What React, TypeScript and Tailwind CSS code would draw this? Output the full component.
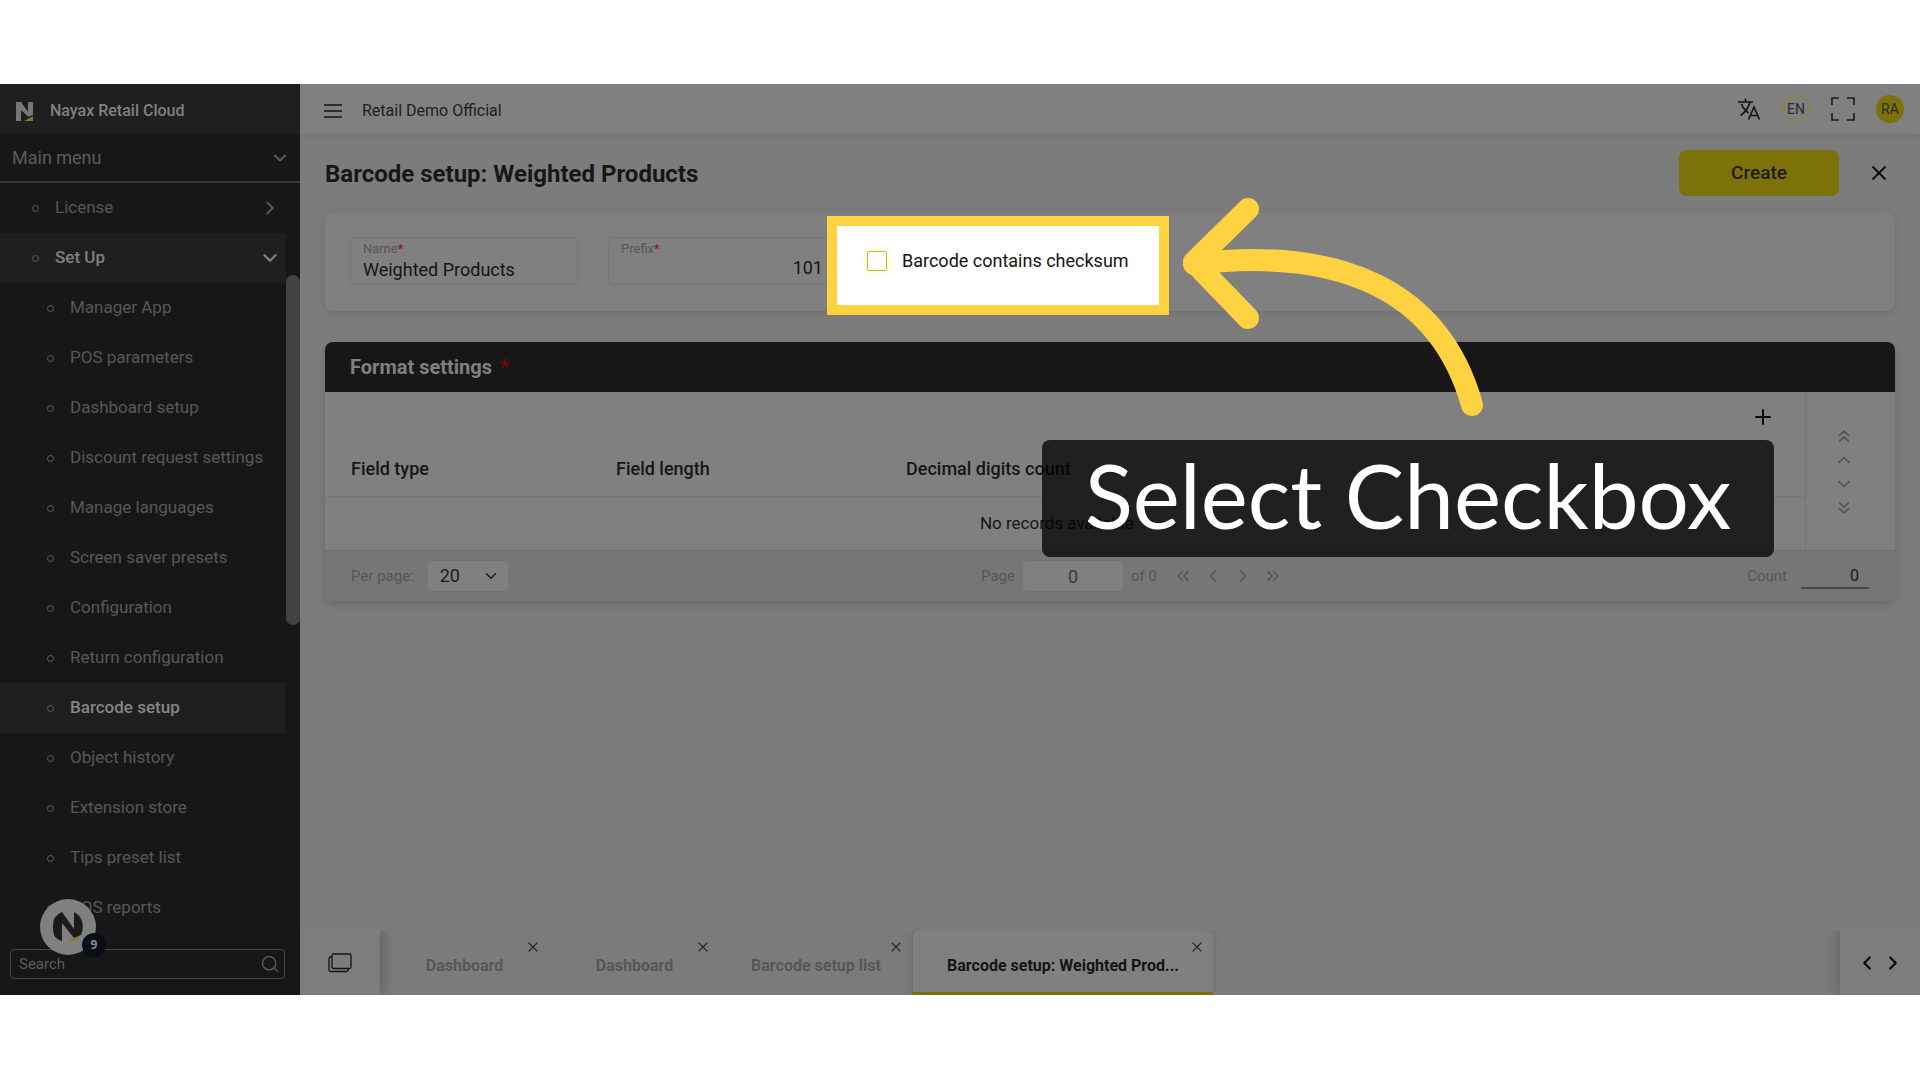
import { useState } from "react";
import {
  ChevronDown,
  ChevronLeft,
  ChevronRight,
  ChevronUp,
  ChevronsDown,
  ChevronsLeft,
  ChevronsRight,
  ChevronsUp,
  Plus,
  Search,
  X,
} from "lucide-react";

const menuItems = [
  "Manager App",
  "POS parameters",
  "Dashboard setup",
  "Discount request settings",
  "Manage languages",
  "Screen saver presets",
  "Configuration",
  "Return configuration",
  "Barcode setup",
  "Object history",
  "Extension store",
  "Tips preset list",
  "POS reports",
];

const tabs = [
  { id: 1, label: "Dashboard", width: "w-[170px]" },
  { id: 2, label: "Dashboard", width: "w-[170px]" },
  { id: 3, label: "Barcode setup list", width: "w-[193px]" },
  { id: 4, label: "Barcode setup: Weighted Prod...", width: "w-[300px]" },
];

const Dot = () => (
  <span className="size-[7px] shrink-0 rounded-full border-[1.5px] border-[#606060]" />
);

const Logo = () => (
  <svg viewBox="0 0 17 19" className="h-[19px] w-[17px]">
    <path d="M0 19V0h5l7 10V0h5v13l-5 1.500L5 8v11z" fill="#777" />
    <path d="M8 19l9-5v5z" fill="#86780a" />
  </svg>
);

const MenuIcon = () => (
  <svg viewBox="0 0 18 14" className="h-[14px] w-[18px]" fill="none" stroke="#2e2e2e" strokeWidth="2">
    <path d="M0 1h18M0 7h18M0 13h18" />
  </svg>
);

const TranslateIcon = () => (
  <svg viewBox="0 0 24 24" className="size-6" fill="none" stroke="#111" strokeWidth="1.6">
    <path d="M1 5h15M8.500 1.500V5M13 5c-1.200 5-4.500 10-9.500 13.500M4.500 7c1.200 4 3.800 6.500 7 9" />
    <path d="M11.500 22.500L17 10l5.500 12.500M13.300 18.500h7.400" />
  </svg>
);

const FullscreenIcon = () => (
  <svg viewBox="0 0 24 24" className="size-6" fill="none" stroke="#1a1a1a" strokeWidth="1.6">
    <path d="M1 8V1h7M16 1h7v7M23 16v7h-7M8 23H1v-7" />
  </svg>
);

const WindowsIcon = () => (
  <svg viewBox="0 0 24 20" className="h-5 w-6" fill="none" stroke="#141414" strokeWidth="1.3">
    <rect x="4" y="1" width="19" height="14.500" rx="1.500" />
    <path d="M4 4H2.500Q1 4 1 5.500v11.500q0 1.500 1.500 1.500H18.500q1.500 0 1.500-1.500v-1.500" />
  </svg>
);

const Sidebar = () => {
  const [active, setActive] = useState("Barcode setup");

  return (
    <aside className="relative flex w-[300px] shrink-0 flex-col bg-[#171717] text-[17px] text-[#575757]">
      <div className="flex h-[50px] items-center gap-[17px] bg-[#1f1f1f] pt-1 pl-4 text-base font-medium text-[#808080]">
        <Logo />
        <span>Nayax Retail Cloud</span>
      </div>
      <button className="flex h-[49px] items-center justify-between border-b-2 border-[#393939] pr-[10px] pl-3 text-lg text-[#5c5c5c]">
        Main menu
        <ChevronDown className="size-5" strokeWidth={2.2} />
      </button>
      <nav className="flex flex-col pr-[14px]">
        <button className="flex h-[50px] items-center pr-[5px] pl-8">
          <Dot />
          <span className="ml-4">License</span>
          <ChevronRight className="ml-auto size-[22px]" strokeWidth={2.2} />
        </button>
        <button className="flex h-[50px] items-center bg-[#1f1f1f] pr-[5px] pl-8 font-medium text-[#808080]">
          <Dot />
          <span className="ml-4">Set Up</span>
          <ChevronDown className="ml-auto size-[22px]" strokeWidth={2.5} />
        </button>
        {menuItems.map((item) => (
          <button
            key={item}
            onClick={() => setActive(item)}
            className={`flex h-[50px] items-center gap-4 pl-[47px] text-left ${
              active === item ? "bg-[#1f1f1f] font-medium text-[#858585]" : ""
            }`}
          >
            <Dot />
            {item}
          </button>
        ))}
      </nav>
      <div className="absolute top-[191px] right-0 h-[350px] w-[14px] rounded-full bg-[#424242]" />
      <label className="mx-[10px] mt-4 mr-[15px] flex h-[30px] items-center rounded-sm border border-[#484848] pr-1 pl-2">
        <input
          type="text"
          aria-label="Search"
          placeholder="Search"
          className="min-w-0 flex-1 bg-transparent text-[15px] outline-none placeholder:text-[#5c5c5c]"
        />
        <Search className="size-5" strokeWidth={1.8} />
      </label>
      <button
        aria-label="Notifications"
        className="absolute bottom-[40px] left-10 flex size-14 items-center justify-center rounded-full bg-[#808080]"
      >
        <svg viewBox="0 0 30 32" className="h-8 w-[30px]">
          <path d="M1 24Q-1 16 1 8Q4 3 9 1l12 17V1q6 3 8 9q2 8-1 14l-7 3L9 12v18Q3 28 1 24z" fill="#1b1b1b" />
          <path d="M15 31q2-2 13-7q-4 7-13 7z" fill="#8a7a1e" />
        </svg>
        <span className="absolute -right-[10px] -bottom-[2px] flex size-6 items-center justify-center rounded-full bg-[#090f19] font-['Open_Sans'] text-xs font-bold text-[#8c8c8c]">
          9
        </span>
      </button>
    </aside>
  );
};

const TopBar = () => (
  <header className="relative flex h-[50px] items-center bg-[#808080] pr-4 pl-6 shadow-[0_2px_6px_rgba(0,0,0,0.08)]">
    <button aria-label="Toggle menu" className="pt-1">
      <MenuIcon />
    </button>
    <span className="ml-5 pt-[3px] text-base text-[#1d1d1d]">Retail Demo Official</span>
    <div className="ml-auto flex items-center gap-[21px]">
      <button aria-label="Translate">
        <TranslateIcon />
      </button>
      <button className="size-7 rounded-full border-[1.5px] border-[#91851a] text-sm text-[#2b2b2b]">EN</button>
      <button aria-label="Fullscreen">
        <FullscreenIcon />
      </button>
      <button className="size-7 rounded-full bg-[#7d7109] text-sm text-[#2b2b2b]">RA</button>
    </div>
  </header>
);

const BarcodeForm = () => {
  const [name, setName] = useState("Weighted Products");
  const [prefix, setPrefix] = useState("101");

  return (
    <section className="flex gap-[30px] rounded-lg bg-[#808080] px-[25px] pt-6 pb-[26px] shadow-[0_2px_6px_rgba(0,0,0,0.1)]">
      <label className="flex h-12 w-[228px] flex-col rounded-sm border border-[#777] px-3 pt-[2px]">
        <span className="text-[13px] leading-[18px] text-[#565656]">
          Name<span className="text-[#8a1420]">*</span>
        </span>
        <input
          value={name}
          onChange={(e) => setName(e.target.value)}
          className="w-full bg-transparent text-lg leading-6 text-[#151515] outline-none"
        />
      </label>
      <label className="flex h-12 w-[228px] flex-col rounded-sm border border-[#777] px-3 pt-[2px]">
        <span className="text-[13px] leading-[18px] text-[#565656]">
          Prefix<span className="text-[#8a1420]">*</span>
        </span>
        <input
          value={prefix}
          onChange={(e) => setPrefix(e.target.value)}
          className="w-full bg-transparent text-right text-lg leading-5 text-[#151515] outline-none"
        />
      </label>
    </section>
  );
};

const FormatSettings = () => {
  const [page, setPage] = useState("0");

  return (
    <section className="mt-[31px] overflow-hidden rounded-lg bg-[#808080] shadow-[0_3px_8px_rgba(0,0,0,0.15)]">
      <h2 className="flex h-[50px] items-center gap-2 bg-[#171717] px-[25px] text-xl font-bold text-[#808080]">
        Format settings <span className="text-[#800008]">*</span>
      </h2>
      <div className="flex">
        <div className="flex-1 border-r border-[#777]">
          <div className="flex h-[50px] items-center justify-end pr-[30px]">
            <button aria-label="Add row">
              <Plus className="size-6 text-[#0c0c0c]" strokeWidth={2} />
            </button>
          </div>
          <table className="w-full text-[#161616]">
            <thead>
              <tr className="h-[54px] border-b border-[#777] text-left text-lg">
                <th className="w-[265px] pl-[26px] font-medium">Field type</th>
                <th className="w-[290px] pl-[26px] font-medium">Field length</th>
                <th className="pl-[26px] font-medium">Decimal digits count</th>
              </tr>
            </thead>
            <tbody>
              <tr className="h-[54px]">
                <td colSpan={3} className="pr-4 text-center text-[17px]">No records available</td>
              </tr>
            </tbody>
          </table>
        </div>
        <div className="flex w-[89px] flex-col items-center gap-1 pt-[34px] pr-[14px] text-[#525252]">
          <button aria-label="Move to top"><ChevronsUp className="size-5" /></button>
          <button aria-label="Move up"><ChevronUp className="size-5" /></button>
          <button aria-label="Move down"><ChevronDown className="size-5" /></button>
          <button aria-label="Move to bottom"><ChevronsDown className="size-5" /></button>
        </div>
      </div>
      <footer className="flex h-[51px] items-center justify-between border-t border-[#6f6f6f] bg-[#767676] px-[26px] text-[15px] text-[#565656]">
        <div className="flex flex-1 items-center gap-[14px]">
          <label htmlFor="per-page">Per page:</label>
          <div className="relative">
            <select
              id="per-page"
              className="h-[30px] w-20 appearance-none rounded-sm bg-[#808080] pl-3 text-lg leading-6 text-[#1b1b1b]"
            >
              <option>20</option>
              <option>50</option>
            </select>
            <ChevronDown className="pointer-events-none absolute top-[6px] right-2 size-[18px] text-[#1b1b1b]" />
          </div>
        </div>
        <div className="flex items-center gap-2 pl-11">
          <label htmlFor="page">Page</label>
          <input
            id="page"
            value={page}
            onChange={(e) => setPage(e.target.value)}
            className="h-[30px] w-[100px] rounded-sm bg-[#808080] text-center text-lg text-[#3a3a3a] outline-none"
          />
          <span>of 0</span>
          <div className="ml-2 flex gap-[10px]">
            <button aria-label="First page"><ChevronsLeft className="size-5" /></button>
            <button aria-label="Previous page"><ChevronLeft className="size-5" /></button>
            <button aria-label="Next page"><ChevronRight className="size-5" /></button>
            <button aria-label="Last page"><ChevronsRight className="size-5" /></button>
          </div>
        </div>
        <div className="flex flex-1 items-center justify-end gap-[14px]">
          <label htmlFor="count">Count</label>
          <input
            id="count"
            readOnly
            value="0"
            className="h-[26px] w-[68px] border-b-2 border-[#484848] bg-transparent pr-[10px] text-right text-base text-[#1b1b1b] outline-none"
          />
        </div>
      </footer>
    </section>
  );
};

const TabBar = () => {
  const [current, setCurrent] = useState(4);

  return (
    <div className="mt-auto flex h-[65px] overflow-hidden bg-[#7b7b7b]">
      <button
        aria-label="All windows"
        className="relative flex w-20 items-center justify-center bg-[#7d7d7d] shadow-[4px_0_10px_rgba(0,0,0,0.2)]"
      >
        <WindowsIcon />
      </button>
      {tabs.map((tab) => (
        <div
          key={tab.id}
          className={`flex ${tab.width} ${
            current === tab.id
              ? "relative rounded-t-lg border-b-3 border-[#7b6f04] bg-[#808080] text-[#141414] shadow-[0_0_8px_rgba(0,0,0,0.1)]"
              : "relative border-r border-[#777] text-[#575757]"
          }`}
        >
          <button
            onClick={() => setCurrent(tab.id)}
            className={`flex-1 text-base font-bold whitespace-nowrap ${current === tab.id ? "pt-[9px]" : "pt-[6px]"}`}
          >
            {tab.label}
          </button>
          <button aria-label={`Close ${tab.label}`} className="absolute top-[9px] right-2">
            <X className="size-4 text-[#2a2a2a]" strokeWidth={1.8} />
          </button>
        </div>
      ))}
      <div className="ml-auto flex w-20 items-center justify-center gap-1 bg-[#7d7d7d] shadow-[-4px_0_10px_rgba(0,0,0,0.15)]">
        <button aria-label="Scroll tabs left"><ChevronLeft className="size-[22px] text-[#0c0c0c]" strokeWidth={2.5} /></button>
        <button aria-label="Scroll tabs right"><ChevronRight className="size-[22px] text-[#0c0c0c]" strokeWidth={2.5} /></button>
      </div>
    </div>
  );
};

// Tutorial layer: highlighted checkbox, arrow and caption over the page
const Callout = () => {
  const [checked, setChecked] = useState(false);

  return (
    <>
      <div className="absolute top-[216px] left-[827px] flex h-[99px] w-[342px] border-10 border-[#ffd242] bg-white pt-[21px] pl-[30px]">
        <label className="flex h-7 items-center gap-[15px] text-lg text-[#151515]">
          <input
            type="checkbox"
            checked={checked}
            onChange={(e) => setChecked(e.target.checked)}
            className="size-5 appearance-none rounded-xs border border-[#c9b92c] bg-white shadow-[0_0_8px_rgba(250,230,60,0.4)] checked:bg-[#f9e213]"
          />
          Barcode contains checksum
        </label>
      </div>
      <svg
        viewBox="1170 190 330 240"
        className="pointer-events-none absolute top-[190px] left-[1170px] h-[240px] w-[330px]"
        fill="none"
        stroke="#ffd242"
        strokeWidth="22"
        strokeLinecap="round"
        strokeLinejoin="round"
      >
        <path d="M1248 209L1194 262L1248 318" />
        <path d="M1194 264C1340 246 1440 290 1472 405" />
      </svg>
      <p className="absolute top-[440px] left-[1042px] flex h-[117px] w-[732px] items-center justify-center rounded-lg bg-black/75 pb-2 font-['Lato'] text-[89px] leading-none whitespace-nowrap text-white">
        Select Checkbox
      </p>
    </>
  );
};

const App = () => {
  return (
    <div className="relative flex min-h-screen flex-col bg-white pt-[84px] pb-[85px] font-['Roboto',sans-serif]">
      <div className="flex flex-1">
        <Sidebar />
        <div className="flex min-w-0 flex-1 flex-col bg-[#7c7c7c]">
          <TopBar />
          <main className="px-[25px] pt-4">
            <div className="mb-[17px] flex items-center">
              <h1 className="pt-[2px] text-2xl font-bold text-[#171717]">Barcode setup: Weighted Products</h1>
              <button className="ml-auto h-[46px] w-40 rounded-lg bg-[#7d7109] text-[19px] font-medium text-[#1b1b1b]">
                Create
              </button>
              <button aria-label="Close" className="mr-1 ml-7">
                <X className="size-6 text-[#0c0c0c]" strokeWidth={1.8} />
              </button>
            </div>
            <BarcodeForm />
            <FormatSettings />
          </main>
          <TabBar />
        </div>
      </div>
      <Callout />
    </div>
  );
};

export default App;
